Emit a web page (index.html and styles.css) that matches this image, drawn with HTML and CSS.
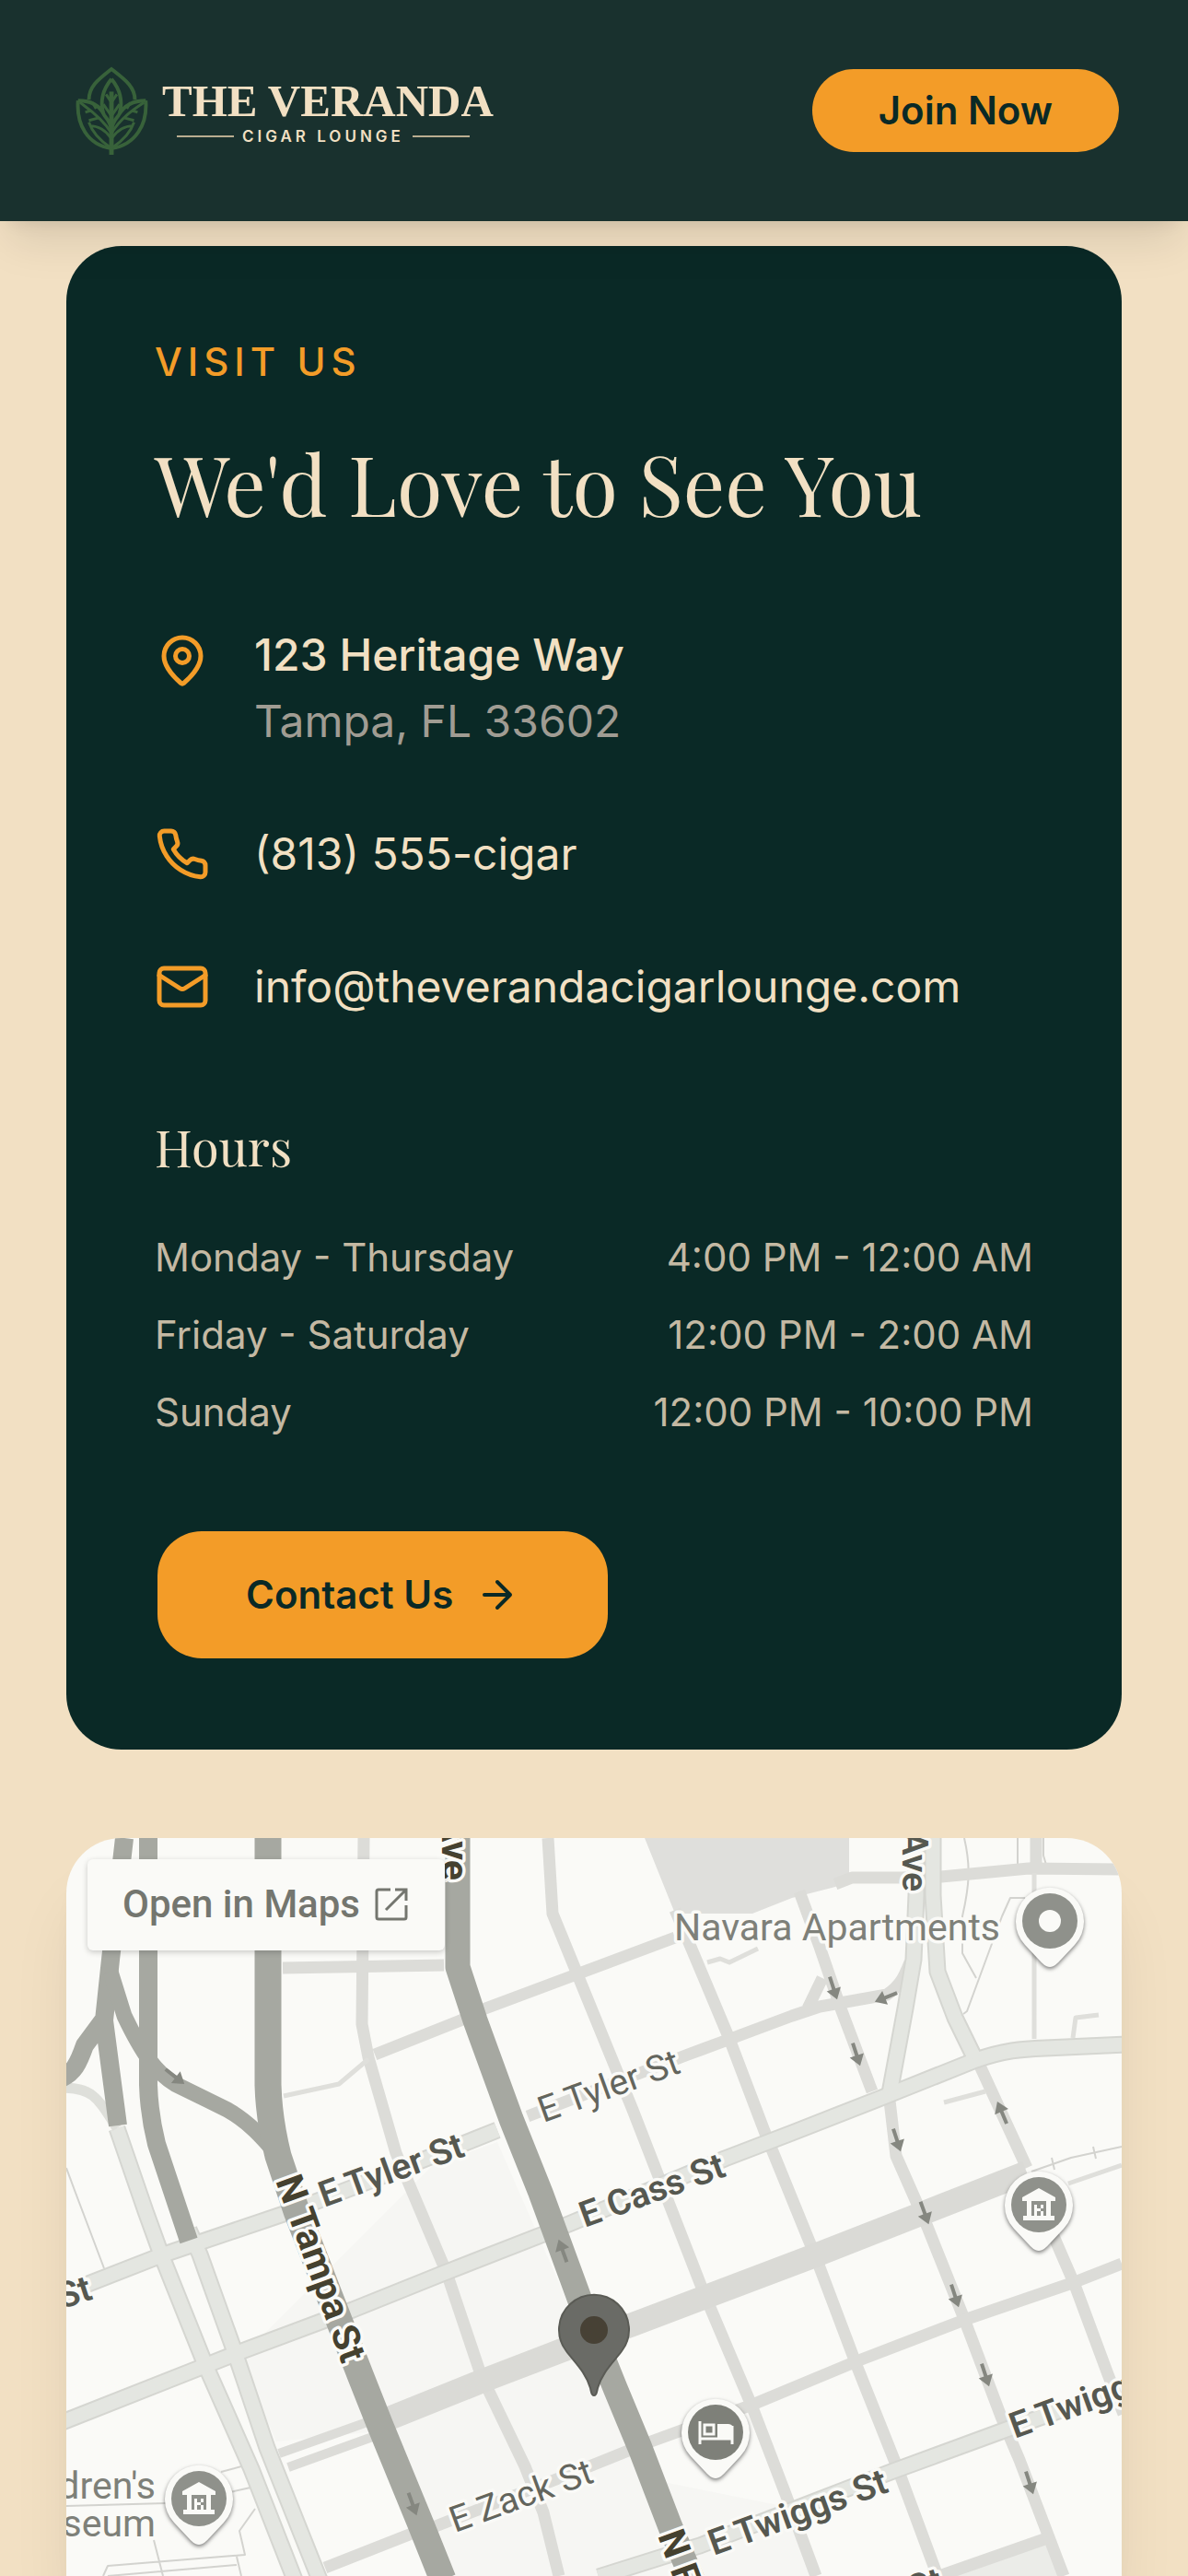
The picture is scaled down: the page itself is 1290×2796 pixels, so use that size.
FILE: index.html
```html
<!DOCTYPE html>
<html lang="en">
    <head>
        <meta charset="utf-8">
        <title>The Veranda Cigar Lounge</title>
        <link rel="stylesheet" href="styles.css">
    </head>
    <body>
        <header class="header">
            <a class="logo" href="#">
                <svg class="leaf" viewBox="0 0 80 98" fill="none" stroke="currentColor" stroke-width="4">
                    <path d="M14 37C14 22 25 14 39 3C53 14 65 22 65 37"/>
                    <path d="M39 14C30 25 26 38 30 52M39 14C48 25 52 38 48 52"/>
                    <path d="M2 38C0 64 12 87 39 91C66 87 79 64 77 38"/>
                    <path d="M2 38C15 38 26 43 31 54C36 60 39 66 39 72C39 66 42 60 47 54C53 43 63 38 77 38"/>
                    <path d="M39 28V98" stroke-width="5"/>
                    <path stroke-width="3" d="M39 40L33 31M39 40L45 31M39 55L30 42M39 55L48 42M4 40C12 46 28 56 39 74M75 40C66 46 50 56 39 74M16 49L10 51M22 47L18 40M62 49L68 51M56 47L60 40M25 57L14 60M53 57L64 60M14 62C18 74 26 82 38 90M64 62C60 74 52 82 40 90M39 80C32 70 24 66 15 66M39 80C46 70 54 66 63 66"/>
                </svg>
                <span class="logo-text">
                    <span class="logo-name">THE VERANDA</span>
                    <span class="logo-sub">CIGAR LOUNGE</span>
                </span>
            </a>
            <button class="btn btn-join" type="button">Join Now</button>
        </header>

        <main class="content">
            <section class="card">
                <p class="eyebrow">VISIT US</p>
                <h2 class="title">We'd Love to See You</h2>

                <ul class="contacts">
                    <li class="top">
                        <svg class="icon" viewBox="0 0 24 24"><path d="M20 10c0 4.993-5.539 10.193-7.399 11.799a1 1 0 0 1-1.202 0C9.539 20.193 4 14.993 4 10a8 8 0 0 1 16 0"/><circle cx="12" cy="10" r="3"/></svg>
                        <address><strong>123 Heritage Way</strong><span>Tampa, FL 33602</span></address>
                    </li>
                    <li>
                        <svg class="icon" viewBox="0 0 24 24"><path d="M22 16.92v3a2 2 0 0 1-2.18 2 19.79 19.79 0 0 1-8.63-3.07 19.5 19.5 0 0 1-6-6 19.79 19.79 0 0 1-3.07-8.67A2 2 0 0 1 4.11 2h3a2 2 0 0 1 2 1.72 12.84 12.84 0 0 0 .7 2.81 2 2 0 0 1-.45 2.11L8.09 9.91a16 16 0 0 0 6 6l1.27-1.27a2 2 0 0 1 2.11-.45 12.84 12.84 0 0 0 2.81.7A2 2 0 0 1 22 16.92z"/></svg>
                        <a href="tel:813555">(813) 555-cigar</a>
                    </li>
                    <li>
                        <svg class="icon" viewBox="0 0 24 24"><rect x="2" y="4" width="20" height="16" rx="2"/><path d="m22 7-8.97 5.7a1.94 1.94 0 0 1-2.06 0L2 7"/></svg>
                        <a href="mailto:info@theverandacigarlounge.com">info@theverandacigarlounge.com</a>
                    </li>
                </ul>

                <h3 class="subtitle">Hours</h3>
                <table class="hours">
                    <tr><th scope="row">Monday - Thursday</th><td>4:00 PM - 12:00 AM</td></tr>
                    <tr><th scope="row">Friday - Saturday</th><td>12:00 PM - 2:00 AM</td></tr>
                    <tr><th scope="row">Sunday</th><td>12:00 PM - 10:00 PM</td></tr>
                </table>

                <a class="btn btn-contact" href="#contact">Contact Us
                    <svg viewBox="0 0 24 24"><path d="M5 12h14M12 5l7 7-7 7"/></svg>
                </a>
            </section>

            <section class="map">
                <svg class="streets" viewBox="72 1995 1146 801">
                    <defs>
                        <path id="arrow" d="M-2 -13H2V1H8L0 13L-8 1H-2Z"/>
                        <path id="drop" d="M0 50C-5 50 -8 46 -12 42L-27 26A37 37 0 1 1 27 26L12 42C8 46 5 50 0 50Z"/>
                        <g id="museum">
                            <use href="#drop" class="drop"/>
                            <circle r="30"/>
                            <path fill="#fafaf7" d="M0 -18L18 -8V-4H-18V-8ZM-13 -4H-8V12H-13ZM13 -4H8V12H13ZM-17 12H17V17H-17ZM-5 0H-2V12H-5ZM5 0H2V12H5ZM-5 4H5V7H-5Z"/>
                        </g>
                    </defs>

                    <!-- blocks -->
                    <path fill="#f6f6f3" d="M470 2350L540 2325L700 2690L850 2720L880 2796H480L400 2640L300 2650L260 2560Z"/>
                    <path fill="#dfdfdc" d="M700 1995L733 2077H817L860 2060L907 2048L922 2040V1995Z"/>
                    <path fill="#ebece8" d="M1030 2796L1137 2760L1150 2796Z"/>

                    <!-- paths -->
                    <g class="thin">
                        <path d="M1105 1995V2028M1133 1995V2014L1136 2024M1047 1995C1054 2025 1053 2045 1045 2080V2120L1060 2147M1113 2060H1097L1088 2080L1050 2183L1046 2186"/>
                        <path d="M1120 2357L1163 2342L1218 2330M1142 2342L1145 2355M1187 2330L1190 2343"/>
                        <path d="M72 2353L82 2380L113 2462M72 2720L180 2717M240 2683L277 2673M250 2705L272 2700M277 2723L260 2747L266 2773L117 2785L112 2796M117 2796L257 2784M167 2757L177 2796M257 2775L262 2796"/>
                    </g>

                    <!-- minor streets -->
                    <g class="minor">
                        <path d="M395 1995L393 2197L400 2233L430 2337L485 2467L522 2577L570 2677L590 2727L607 2796"/>
                        <path d="M595 1995L600 2077L627 2143L687 2290L727 2393L762 2483L817 2613L853 2707L886 2796"/>
                        <path d="M733 2073L750 2113L792 2213L830 2313L887 2453L930 2567L975 2680L1018 2796"/>
                        <path d="M868 2053L890 2113L913 2180L947 2270"/>
                        <path d="M966 2280L973 2340L1007 2417L1047 2517L1087 2623L1107 2670L1155 2796"/>
                        <path d="M1063 2240L1115 2353M1128 2390L1167 2480L1203 2577L1220 2620"/>
                        <path d="M893 2147L877 2180M307 2136L482 2133"/>
                        <path d="M407 2230L500 2193L527 2180L733 2103"/>
                        <path d="M907 2045L925 2038H978L1022 2037L1117 2028L1218 2029M1125 1995V2028"/>
                        <path d="M573 2297L747 2230L793 2213L860 2188L890 2178L963 2165C978 2155 982 2145 988 2130"/>
                        <path d="M353 2787L447 2750L473 2742L640 2677L707 2650L817 2610L930 2563L1050 2517L1167 2477L1218 2457"/>
                        <path d="M1020 2796L1137 2755"/>
                    </g>
                    <path class="rail" d="M410 2630L527 2583L613 2550L687 2523L880 2450L1000 2403L1115 2358"/>
                    <path class="lane" d="M303 2663L410 2625M313 2678L410 2643"/>
                    <path class="alley" d="M308 2275L368 2262L400 2235M1123 2033V2213M1165 2212L1168 2190L1193 2187M1025 2282L1070 2270M1160 2370L1218 2350M768 2130L782 2126L792 2130L823 2115"/>

                    <!-- main streets: outline first, then fill -->
                    <g class="main-edge">
                        <g id="mains">
                            <path d="M127 2310L158 2400L175 2447L223 2567L273 2680L320 2800"/>
                            <path d="M205 2420L217 2447L255 2553L290 2657L347 2800"/>
                            <path d="M60 2493L175 2448L308 2403L410 2364L540 2312"/>
                            <path d="M60 2632L217 2570L260 2553L383 2507L480 2468L590 2425L620 2413L787 2343L860 2315L957 2277L1057 2237C1090 2225 1110 2224 1135 2223L1225 2219"/>
                            <path d="M650 2797L720 2775L760 2763L970 2682L1090 2638L1225 2590"/>
                            <path d="M995 1995V2057L992 2127L983 2180L966 2272"/>
                            <path d="M1013 1995V2057L1018 2140L1037 2190L1058 2233"/>
                        </g>
                    </g>
                    <use href="#mains" class="main-fill"/>
                    <path class="main-small" d="M66 2266C100 2266 105 2275 127 2310"/>

                    <!-- highways -->
                    <g class="highway">
                        <path stroke-width="20" d="M135 1995L120 2127L113 2193L128 2307M112 2193L92 2220C85 2240 80 2250 66 2256"/>
                        <path stroke-width="17" d="M120 2140L135 2188C155 2230 170 2250 190 2262L247 2290C270 2303 285 2320 302 2340"/>
                        <path stroke-width="20" d="M161 1995V2263Q162 2295 170 2327L205 2432"/>
                        <path stroke-width="29" d="M291 1995V2263Q292 2300 302 2340L322 2400L392 2580L413 2633L457 2740L481 2800"/>
                        <path stroke-width="27" d="M497 1995V2135L516 2193L555 2300L587 2380L631 2500L668 2592L695 2657L728 2743L752 2800"/>
                    </g>

                    <g class="arrows">
                        <use href="#arrow" transform="translate(905 2158) rotate(-18)"/>
                        <use href="#arrow" transform="translate(930 2230) rotate(-18)"/>
                        <use href="#arrow" transform="translate(974 2323) rotate(-18)"/>
                        <use href="#arrow" transform="translate(1004 2402) rotate(-20)"/>
                        <use href="#arrow" transform="translate(1037 2492) rotate(-18)"/>
                        <use href="#arrow" transform="translate(1070 2578) rotate(-18)"/>
                        <use href="#arrow" transform="translate(1118 2695) rotate(-18)"/>
                        <use href="#arrow" transform="translate(1088 2293) rotate(157)"/>
                        <use href="#arrow" transform="translate(962 2168) rotate(68)"/>
                        <use href="#arrow" transform="translate(611 2443) rotate(160)"/>
                        <use href="#arrow" transform="translate(448 2718) rotate(-20)"/>
                        <use href="#arrow" transform="translate(190 2254) rotate(-52)"/>
                    </g>

                    <g class="labels">
                        <text transform="translate(352 2396) rotate(-20)">E Tyler St</text>
                        <text class="light" transform="translate(590 2304) rotate(-20)">E Tyler St</text>
                        <text transform="translate(635 2418) rotate(-20)">E Cass St</text>
                        <text class="light" transform="translate(494 2749) rotate(-20)">E Zack St</text>
                        <text transform="translate(775 2774) rotate(-20)">E Twiggs St</text>
                        <text transform="translate(1102 2647) rotate(-20)">E Twiggs St</text>
                        <text text-anchor="end" transform="translate(102 2495) rotate(-18)">St</text>
                        <text text-anchor="end" transform="translate(1026 2812) rotate(-18)">St</text>
                        <text text-anchor="end" transform="translate(980 2053) rotate(90)">N Ave</text>
                        <text class="dark" text-anchor="end" transform="translate(480 2041) rotate(90)">N Ave</text>
                        <text class="dark" transform="translate(299 2367) rotate(70)">N Tampa St</text>
                        <text class="dark" transform="translate(714 2752) rotate(70)">N Florida Ave</text>
                    </g>
                    <g class="places">
                        <text x="732" y="2106">Navara Apartments</text>
                        <text x="169" y="2712" text-anchor="end">Children's</text>
                        <text x="169" y="2753" text-anchor="end">Museum</text>
                    </g>

                    <g class="pins">
                        <g transform="translate(1140 2085)"><use href="#drop" class="drop"/><circle r="30"/><circle r="12" fill="#fafaf7"/></g>
                        <use href="#museum" x="1128" y="2393"/>
                        <use href="#museum" x="216" y="2712"/>
                        <g transform="translate(777 2640)">
                            <use href="#drop" class="drop"/>
                            <circle r="30" fill="#7e8079"/>
                            <path fill="none" stroke="#fafaf7" stroke-width="3" d="M-17 -12V13M-17 7H18M18 13V-7"/>
                            <path fill="#fafaf7" d="M2 -9H14Q19 -9 19 -3V8H2Z"/>
                            <rect x="-12" y="-8" width="10" height="10" fill="none" stroke="#fafaf7" stroke-width="3"/>
                        </g>
                    </g>
                    <path fill="#6a6b66" stroke="#5a5b55" stroke-width="2" d="M645 2600C642 2600 642 2596 641 2592C636 2575 625 2565 615 2552A38 38 0 1 1 675 2552C665 2565 654 2575 649 2592C648 2596 648 2600 645 2600Z"/>
                    <circle cx="645" cy="2529" r="15" fill="#474135"/>
                </svg>
                <a class="open-maps" href="#map">Open in Maps
                    <svg viewBox="0 0 36 36"><path d="M17 2H4Q2 2 2 4V32Q2 34 4 34H32Q34 34 34 32V19M22 2H34V14M33 3L12 24"/></svg>
                </a>
            </section>
        </main>
    </body>
</html>
```

FILE: styles.css
```css
* {
    box-sizing: border-box;
}
body {
    margin: 0;
    background: #f2e0c3;
    color: #f2e0c3;
    font-family: Inter, "Liberation Sans", sans-serif;
    font-size: 48px;
    line-height: 72px;
}
a {
    color: inherit;
    text-decoration: none;
}
.header {
    position: relative;
    z-index: 2;
    display: flex;
    align-items: center;
    justify-content: space-between;
    padding: 72px;
    background: #19312e;
    box-shadow: 0 30px 45px -9px rgba(0,0,0,0.1), 0 12px 18px -12px rgba(0,0,0,0.1);
}
    .logo {
        display: flex;
        align-items: center;
        gap: 14px;
        padding-left: 10px;
    }
    .leaf {
        width: 80px;
        height: 96px;
        color: #38623a;
    }
    .logo-text {
        display: flex;
        flex-direction: column;
        gap: 4px;
        padding-top: 4px;
    }
    .logo-name {
        font-family: "Liberation Serif", serif;
        font-size: 49px;
        font-weight: bold;
        line-height: 48px;
    }
    .logo-sub {
        display: flex;
        align-items: center;
        gap: 9px;
        padding: 0 26px 0 16px;
        font-size: 17px;
        font-weight: 600;
        letter-spacing: 4px;
        line-height: 20px;
    }
    .logo-sub:before,
    .logo-sub:after {
        content: '';
        flex: 1;
        height: 2px;
        background: #b9ad90;
    }

.btn {
    display: inline-flex;
    align-items: center;
    gap: 24px;
    border: 3px solid transparent;
    background: #f39c28;
    background-clip: padding-box;
    color: #0a2926;
    font-family: inherit;
    font-size: 42px;
    font-weight: 600;
    line-height: 60px;
}
.btn svg {
    width: 48px;
    height: 48px;
    fill: none;
    stroke: currentColor;
    stroke-width: 2;
    stroke-linecap: round;
    stroke-linejoin: round;
}
.btn-join {
    padding: 15px 72px;
    border-radius: 48px;
}
.btn-contact {
    padding: 39px 96px;
    border-radius: 51px;
}

.content {
    padding: 27px 72px 0;
}
.card {
    margin-bottom: 96px;
    padding: 96px;
    border-radius: 60px;
    background: #0a2926;
}
    .eyebrow {
        margin: 0 0 48px;
        color: #f39c28;
        font-size: 42px;
        font-weight: 500;
        letter-spacing: 6px;
        line-height: 60px;
    }
    .title,
    .subtitle {
        margin: 0;
        font-family: "Playfair Display", "Liberation Serif", serif;
        font-weight: normal;
    }
    .title {
        margin-bottom: 98px;
        font-size: 90px;
        line-height: 106px;
    }
    .contacts {
        display: flex;
        flex-direction: column;
        gap: 72px;
        margin: 0 0 96px;
        padding: 0;
        list-style: none;
    }
    .contacts li {
        display: flex;
        align-items: center;
        gap: 48px;
    }
    .contacts .top {
        align-items: flex-start;
    }
    .contacts .top .icon {
        margin-top: 12px;
    }
    .icon {
        width: 60px;
        height: 60px;
        fill: none;
        stroke: #f39c28;
        stroke-width: 2;
        stroke-linecap: round;
        stroke-linejoin: round;
    }
    address {
        font-style: normal;
    }
    address strong,
    address span {
        display: block;
    }
    address strong {
        font-weight: 500;
    }
    address span {
        color: #a09c93;
    }
    .subtitle {
        margin-bottom: 48px;
        font-size: 54px;
        line-height: 84px;
    }
    .hours {
        width: 100%;
        margin-bottom: 72px;
        border-collapse: collapse;
        color: #c4b9a3;
        font-size: 42px;
        line-height: 60px;
    }
    .hours th,
    .hours td {
        padding: 0 0 24px;
        font-weight: normal;
        text-align: left;
    }
    .hours td {
        text-align: right;
    }
    .btn-contact {
        display: flex;
        width: fit-content;
    }

.map {
    position: relative;
    overflow: hidden;
    border-radius: 60px 60px 0 0;
    background: #fafaf7;
    box-shadow: 0 60px 75px -15px rgba(0,0,0,0.1), 0 24px 30px -18px rgba(0,0,0,0.1);
}
    .streets {
        display: block;
        width: 100%;
        font-family: Roboto, sans-serif;
    }
    .streets path {
        stroke-linejoin: round;
    }
    .thin, .minor, .rail, .lane, .alley, .main-edge, .main-fill, .main-small, .highway {
        fill: none;
    }
    .thin {
        stroke: #d3d3cf;
        stroke-width: 2;
    }
    .minor {
        stroke: #dcdcd8;
        stroke-width: 13;
    }
    .rail {
        stroke: #dadad6;
        stroke-width: 26;
    }
    .lane {
        stroke: #dcdcd8;
        stroke-width: 10;
    }
    .alley {
        stroke: #dfdfdb;
        stroke-width: 5;
    }
    .main-edge {
        stroke: #d5d6d1;
        stroke-width: 19;
    }
    .main-fill {
        stroke: #e4e6e1;
        stroke-width: 15;
    }
    .main-small {
        stroke: #dedfda;
        stroke-width: 11;
    }
    .highway {
        stroke: #a6a8a1;
    }
    .arrows {
        fill: #858780;
    }
    .labels text,
    .places text {
        paint-order: stroke;
        stroke: #fafaf7;
        stroke-width: 7px;
        stroke-linejoin: round;
    }
    .labels {
        fill: #565850;
        font-size: 39px;
        font-weight: 600;
    }
    .labels .light {
        fill: #63655d;
        font-weight: 400;
    }
    .labels .dark {
        fill: #45412f;
        font-size: 41px;
        font-weight: 700;
    }
    .places {
        fill: #7e8079;
        font-size: 41px;
    }
    .pins {
        fill: #8f918b;
    }
    .drop {
        fill: #fafaf7;
        filter: drop-shadow(0 2px 2px rgba(0,0,0,0.5));
    }
    .open-maps {
        position: absolute;
        top: 23px;
        left: 23px;
        display: flex;
        align-items: center;
        gap: 16px;
        padding: 14px 40px 15px 38px;
        border-radius: 6px;
        background: #fafaf7;
        box-shadow: 0 2px 6px rgba(0,0,0,0.2);
        color: #74766f;
        font-family: Roboto, sans-serif;
        font-size: 42px;
        font-weight: 500;
        line-height: 70px;
    }
    .open-maps svg {
        width: 36px;
        height: 36px;
        fill: none;
        stroke: currentColor;
        stroke-width: 3;
    }
```
